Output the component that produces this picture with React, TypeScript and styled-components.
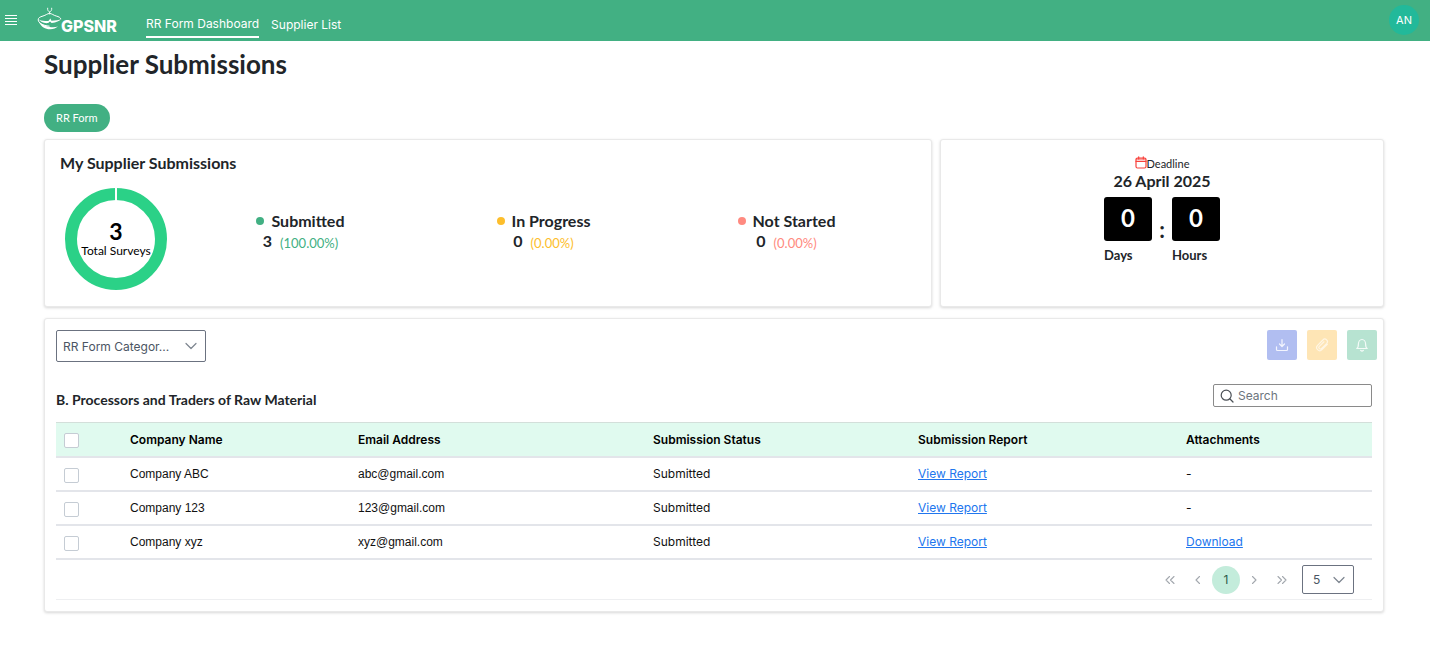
import React from "react";
import styled, { createGlobalStyle } from "styled-components";

const heading = `Lato, "Open Sans", sans-serif`;
const ui = `Inter, "Liberation Sans", sans-serif`;
const body = `"Liberation Sans", Arial, sans-serif`;

const GlobalStyle = createGlobalStyle`
  *, *::before, *::after { box-sizing: border-box; }
  body { margin: 0; background: #fff; color: #212529; font-family: ${heading}; }
  h1, h2, h3, p { margin: 0; }
  button, input, select { font: inherit; color: inherit; }
`;

const Header = styled.header`
  display: flex;
  align-items: center;
  height: 41px;
  padding: 0 11px 2px 5px;
  background: #42b083;
  color: #fff;
`;
const MenuButton = styled.button`
  display: flex;
  padding: 0;
  border: 0;
  background: none;
`;
const LogoLink = styled.a`
  display: flex;
  margin-left: 20px;
  color: #fff;
`;
const Nav = styled.nav`
  display: flex;
  flex: 1;
  gap: 12px;
  margin-left: 28px;
  font-family: ${ui};
`;
const NavLink = styled.a<{ $active?: boolean }>`
  padding: ${(p) => (p.$active ? "12px 0 2px" : "13px 0 1px")};
  border-bottom: 2px solid ${(p) => (p.$active ? "#fff" : "transparent")};
  color: #fff;
  font-size: 12px;
  line-height: 20px;
  text-decoration: none;
`;
const Avatar = styled.button`
  width: 30px;
  height: 30px;
  padding: 0;
  border: 0;
  border-radius: 50%;
  background: #22b99a;
  color: #fff;
  font-family: ${ui};
  font-size: 11px;
`;

const Main = styled.main`
  padding: 8px 46px 16px 44px;
`;
const Title = styled.h1`
  font-size: 26px;
  line-height: 30px;
`;
const Pill = styled.button`
  display: block;
  height: 28px;
  margin: 25px 0 7px;
  padding: 0 12px 2px;
  border: 0;
  border-radius: 14px;
  background: #42b083;
  color: #fff;
  font-size: 11px;
`;

const Card = styled.section`
  border: 1px solid #e9e9e9;
  border-radius: 3px;
  background: #fff;
  box-shadow: 0 1px 3px rgba(0, 0, 0, 0.16);
`;
const CardRow = styled.div`
  display: grid;
  grid-template-columns: 2fr 1fr;
  gap: 8px;
  margin-bottom: 11px;
`;
const SummaryCard = styled(Card)`
  padding: 13px 16px 15px 15px;
`;
const CardTitle = styled.h2`
  font-size: 16px;
  line-height: 20px;
`;
const SummaryBody = styled.div`
  display: flex;
  margin: 14px 7px 0 5px;
`;
const Donut = styled.div`
  display: grid;
  place-items: center;
  width: 102px;
  height: 104px;
  color: #000;
  > * { grid-area: 1 / 1; }
`;
const DonutLabel = styled.p`
  text-align: center;
  font-size: 12px;
  line-height: 16px;
`;
const DonutCount = styled.strong`
  display: block;
  font-size: 23px;
  line-height: 24px;
`;
const Stats = styled.div`
  display: grid;
  grid-template-columns: repeat(3, 1fr);
  flex: 1;
  margin-left: 12px;
  padding-top: 24px;
`;
const Stat = styled.div`
  display: flex;
  flex-direction: column;
  align-items: center;
`;
const StatName = styled.h3<{ $color: string }>`
  display: flex;
  align-items: center;
  gap: 7px;
  font-size: 16px;
  line-height: 20px;
  &::before {
    content: "";
    width: 8px;
    height: 8px;
    border-radius: 50%;
    background: ${(p) => p.$color};
  }
`;
const StatValue = styled.p<{ $color: string }>`
  display: flex;
  gap: 8px;
  font-size: 16px;
  font-weight: 700;
  line-height: 20px;
  span {
    padding-top: 2px;
    color: ${(p) => p.$color};
    font-size: 13px;
    font-weight: 400;
  }
`;

const DeadlineCard = styled(Card)`
  display: flex;
  flex-direction: column;
  align-items: center;
  padding-top: 16px;
`;
const DeadlineLabel = styled.p`
  display: flex;
  font-size: 11px;
  line-height: 16px;
`;
const DeadlineDate = styled.p`
  font-size: 16px;
  font-weight: 700;
  line-height: 18px;
`;
const Countdown = styled.div`
  display: flex;
  margin-top: 7px;
`;
const Unit = styled.div`
  font-size: 13px;
  font-weight: 700;
  line-height: 20px;
`;
const UnitValue = styled.div`
  width: 48px;
  height: 44px;
  margin-bottom: 4px;
  border-radius: 3px;
  background: #000;
  color: #fff;
  text-align: center;
  font-size: 24px;
  line-height: 42px;
`;
const Colon = styled.span`
  width: 20px;
  padding-top: 18px;
  text-align: center;
  font-size: 22px;
  font-weight: 700;
  line-height: 30px;
`;

const Panel = styled(Card)`
  padding: 11px;
`;
const Toolbar = styled.div`
  display: flex;
  align-items: flex-start;
  justify-content: space-between;
  margin-right: -5px;
`;
const SelectBox = styled.div<{ $width: number; $pad: number }>`
  display: grid;
  align-items: center;
  width: ${(p) => p.$width}px;
  > * { grid-area: 1 / 1; }
  select {
    appearance: none;
    width: 100%;
    padding: 0 ${(p) => p.$pad}px;
    border: 1px solid #6b7280;
    border-radius: 2px;
    background: #fff;
    color: #4b5563;
    font-family: ${ui};
    font-size: 12px;
  }
  svg {
    justify-self: end;
    margin-right: 9px;
    pointer-events: none;
  }
`;
const CategorySelect = styled.select`
  height: 32px;
`;
const PageSizeSelect = styled.select`
  height: 29px;
`;
const Actions = styled.div`
  display: flex;
  gap: 10px;
`;
const ActionButton = styled.button<{ $color: string }>`
  display: grid;
  place-items: center;
  width: 30px;
  height: 30px;
  padding: 0;
  border: 0;
  border-radius: 2px;
  background: ${(p) => p.$color};
`;
const TableBar = styled.div`
  display: flex;
  align-items: flex-start;
  justify-content: space-between;
  margin: 22px 0 12px;
`;
const TableTitle = styled.h2`
  padding-top: 6px;
  font-size: 14px;
  line-height: 20px;
`;
const SearchBox = styled.label`
  display: flex;
  align-items: center;
  gap: 4px;
  width: 159px;
  height: 23px;
  padding: 0 6px;
  border: 1px solid #8a8a8a;
  border-radius: 2px;
  input {
    flex: 1;
    min-width: 0;
    padding: 0;
    border: 0;
    outline: 0;
    background: none;
    font-family: ${ui};
    font-size: 12px;
  }
  input::placeholder { color: #6c757d; opacity: 1; }
`;

const Table = styled.table`
  width: 100%;
  table-layout: fixed;
  border-collapse: separate;
  border-spacing: 0;
  font-family: ${ui};
  font-size: 12px;
  line-height: 16px;
  th, td {
    height: 34px;
    padding: 0 12px;
    border-bottom: 2px solid #e3e5ea;
    text-align: left;
    color: #111;
  }
  th {
    height: 36px;
    border-top: 1px solid #d3dfda;
    background: #e0faef;
    font-weight: 600;
    color: #000;
  }
  th:first-child, td:first-child { padding: 0 8px; }
`;
const TextCell = styled.td`
  font-family: ${body};
`;
const Check = styled.input`
  appearance: none;
  display: block;
  width: 15px;
  height: 15px;
  margin: 2px 0 0;
  border: 1px solid #c5ccd4;
  border-radius: 2px;
  background: #fff;
`;
const TableLink = styled.a`
  color: #2176ee;
`;
const Pager = styled.nav`
  display: flex;
  align-items: center;
  justify-content: flex-end;
  height: 40px;
  padding-right: 18px;
  border-bottom: 1px solid #eeeff1;
  font-family: ${ui};
`;
const Pages = styled.div`
  display: flex;
  margin-right: 6px;
`;
const PageButton = styled.button<{ $active?: boolean }>`
  display: grid;
  place-items: center;
  width: 28px;
  height: 28px;
  padding: 0;
  border: 0;
  border-radius: 50%;
  background: ${(p) => (p.$active ? "#c3ecdb" : "none")};
  color: ${(p) => (p.$active ? "#2c5a48" : "#a3a8ae")};
  font-size: 12px;
`;

const Chevron = () => (
  <svg width="12" height="8" viewBox="0 0 12 8" fill="none" stroke="#7d858f" strokeWidth="1.2" strokeLinecap="round" strokeLinejoin="round" aria-hidden="true">
    <path d="M1 1.5 6 6.5 11 1.5" />
  </svg>
);

const Arrow = ({ d }: { d: string }) => (
  <svg width="12" height="10" viewBox="0 0 12 10" fill="none" stroke="currentColor" strokeWidth="1.1" strokeLinecap="round" strokeLinejoin="round" aria-hidden="true">
    <path d={d} />
  </svg>
);

const Logo = () => (
  <svg width="81" height="30" viewBox="0 0 81 30" fill="none" stroke="#fff" aria-label="GPSNR" role="img">
    <g transform="translate(0 2)">
      <path d="M10.6 1.2c-.3 2 .6 3 2 3.9 1.500-.9 2.400-1.900 2.100-3.900M12.600 5v2" strokeWidth=".9" strokeLinecap="round" />
      <path d="M12.600 6.400C10 6.700 9 8.200 6 9 2.800 9.900 1 11 1.200 13c.3 3 4.300 5.500 11.400 6.200M12.600 6.400c2.600.3 3.600 1.800 6.600 2.600 2.600.7 4.300 1.600 4.700 3.100" strokeWidth="1" />
      <path d="M1 11.600c2 2.500 6 2.700 10.400 2.300l2-2.400 1 2.200c4.200-.1 7.600-.3 9.800-1.700-1.800 2-4.800 3.700-9.600 3.900l-1.600-1.500-1.800 1.700C6.500 16.600 3.500 15 1 11.600z" fill="#fff" stroke="none" />
      <path d="M1.800 14.500C4 20.300 9 22.500 13.300 22.300c3.200-.1 5.700-1 7.700-2.700-4.300 1.300-12.500 1.300-19.200-5.100z" fill="#fff" stroke="none" />
    </g>
    <text x="24" y="27" fill="#fff" stroke="none" fontFamily={ui} fontWeight="800" fontSize="16">GPSNR</text>
  </svg>
);

const companies = [
  { name: "Company ABC", email: "abc@gmail.com", attachment: false },
  { name: "Company 123", email: "123@gmail.com", attachment: false },
  { name: "Company xyz", email: "xyz@gmail.com", attachment: true },
];

const stats = [
  { name: "Submitted", value: 3, share: "(100.00%)", color: "#42b083" },
  { name: "In Progress", value: 0, share: "(0.00%)", color: "#fdbe2c" },
  { name: "Not Started", value: 0, share: "(0.00%)", color: "#ff8a80" },
];

export default function App() {
  return (
    <>
      <GlobalStyle />
      <Header>
        <MenuButton aria-label="Menu">
          <svg width="12" height="12" viewBox="0 0 12 12" stroke="#fff" strokeWidth="1" aria-hidden="true">
            <path d="M0 1.500h12M0 4.500h12M0 7.500h12M0 10.500h12" />
          </svg>
        </MenuButton>
        <LogoLink href="#"><Logo /></LogoLink>
        <Nav>
          <NavLink href="#dashboard" $active>RR Form Dashboard</NavLink>
          <NavLink href="#suppliers">Supplier List</NavLink>
        </Nav>
        <Avatar>AN</Avatar>
      </Header>
      <Main>
        <Title>Supplier Submissions</Title>
        <Pill>RR Form</Pill>
        <CardRow>
          <SummaryCard>
            <CardTitle>My Supplier Submissions</CardTitle>
            <SummaryBody>
              <Donut>
                <svg width="102" height="102" viewBox="0 0 102 102" aria-hidden="true">
                  <circle cx="51" cy="51" r="45" fill="none" stroke="#2bd187" strokeWidth="12" />
                  <path d="M51 0v13" stroke="#fff" strokeWidth="2" />
                </svg>
                <DonutLabel><DonutCount>3</DonutCount>Total Surveys</DonutLabel>
              </Donut>
              <Stats>
                {stats.map((s) => (
                  <Stat key={s.name}>
                    <StatName $color={s.color}>{s.name}</StatName>
                    <StatValue $color={s.color}>{s.value}<span>{s.share}</span></StatValue>
                  </Stat>
                ))}
              </Stats>
            </SummaryBody>
          </SummaryCard>
          <DeadlineCard>
            <DeadlineLabel>
              <svg width="12" height="13" viewBox="0 0 12 13" fill="none" stroke="#f8423c" strokeWidth="1.2" strokeLinecap="round" strokeLinejoin="round" aria-hidden="true">
                <rect x="1" y="2" width="10" height="10" rx="1.5" />
                <path d="M1 5.300h10M1.500 3h9M3.700.8v2.400M8.300.8v2.400" />
              </svg>
              Deadline
            </DeadlineLabel>
            <DeadlineDate>26 April 2025</DeadlineDate>
            <Countdown>
              <Unit><UnitValue>0</UnitValue>Days</Unit>
              <Colon>:</Colon>
              <Unit><UnitValue>0</UnitValue>Hours</Unit>
            </Countdown>
          </DeadlineCard>
        </CardRow>
        <Panel>
          <Toolbar>
            <SelectBox $width={150} $pad={6}>
              <CategorySelect aria-label="RR Form Category"><option>RR Form Categor...</option></CategorySelect>
              <Chevron />
            </SelectBox>
            <Actions>
              <ActionButton $color="#b1bef1" aria-label="Download">
                <svg width="14" height="14" viewBox="0 0 14 14" fill="none" stroke="#f3f5fe" strokeWidth="1.2" strokeLinecap="round" strokeLinejoin="round">
                  <path d="M7 1.500v7M4.500 6 7 8.500 9.500 6M1.500 8.800v2.700c0 .5.400 1 1 1h9c.600 0 1-.5 1-1V8.800" />
                </svg>
              </ActionButton>
              <ActionButton $color="#fee5b5" aria-label="Attachments">
                <svg width="14" height="14" viewBox="0 0 14 14" fill="none" stroke="#fff6e4" strokeWidth="1.2" strokeLinecap="round" strokeLinejoin="round">
                  <path d="M12.300 6.400 7 11.700a3.100 3.100 0 0 1-4.400-4.400l5.300-5.300a2.500 2.500 0 0 1 3.900 3.300L6.600 10.500a1.500 1.500 0 0 1-2.300-2.100L9 3.800" />
                </svg>
              </ActionButton>
              <ActionButton $color="#b7e3d1" aria-label="Notify">
                <svg width="14" height="14" viewBox="0 0 14 14" fill="none" stroke="#f4fbf8" strokeWidth="1.2" strokeLinecap="round" strokeLinejoin="round">
                  <path d="M1.800 10.500c1.500-.8 1.600-2.200 1.600-4.500C3.400 3.500 5 1.500 7 1.500S10.600 3.500 10.600 6c0 2.300.1 3.700 1.600 4.500zM5.600 12.300c.7.700 2.100.7 2.800 0" />
                </svg>
              </ActionButton>
            </Actions>
          </Toolbar>
          <TableBar>
            <TableTitle>B. Processors and Traders of Raw Material</TableTitle>
            <SearchBox>
              <svg width="14" height="14" viewBox="0 0 14 14" fill="none" stroke="#4b5056" strokeWidth="1.2" strokeLinecap="round" aria-hidden="true">
                <circle cx="6.200" cy="6.200" r="5" />
                <path d="m10 10 3 3" />
              </svg>
              <input placeholder="Search" aria-label="Search" />
            </SearchBox>
          </TableBar>
          <Table>
            <colgroup>
              <col width="62" /><col width="228" /><col width="295" /><col width="265" /><col width="268" /><col width="198" />
            </colgroup>
            <thead>
              <tr>
                <th><Check type="checkbox" aria-label="Select all" /></th>
                <th>Company Name</th>
                <th>Email Address</th>
                <th>Submission Status</th>
                <th>Submission Report</th>
                <th>Attachments</th>
              </tr>
            </thead>
            <tbody>
              {companies.map((c) => (
                <tr key={c.name}>
                  <td><Check type="checkbox" aria-label={`Select ${c.name}`} /></td>
                  <TextCell>{c.name}</TextCell>
                  <TextCell>{c.email}</TextCell>
                  <td>Submitted</td>
                  <td><TableLink href="#report">View Report</TableLink></td>
                  <td>{c.attachment ? <TableLink href="#download">Download</TableLink> : "-"}</td>
                </tr>
              ))}
            </tbody>
          </Table>
          <Pager aria-label="Pagination">
            <Pages>
              <PageButton aria-label="First page"><Arrow d="M5.500 1.500 2 5l3.500 3.500M10 1.500 6.500 5 10 8.500" /></PageButton>
              <PageButton aria-label="Previous page"><Arrow d="M7.500 1.500 4 5l3.500 3.500" /></PageButton>
              <PageButton $active>1</PageButton>
              <PageButton aria-label="Next page"><Arrow d="M4.500 1.500 8 5 4.500 8.500" /></PageButton>
              <PageButton aria-label="Last page"><Arrow d="M2 1.500 5.500 5 2 8.500M6.500 1.500 10 5 6.500 8.500" /></PageButton>
            </Pages>
            <SelectBox $width={52} $pad={10}>
              <PageSizeSelect aria-label="Rows per page"><option>5</option></PageSizeSelect>
              <Chevron />
            </SelectBox>
          </Pager>
        </Panel>
      </Main>
    </>
  );
}
